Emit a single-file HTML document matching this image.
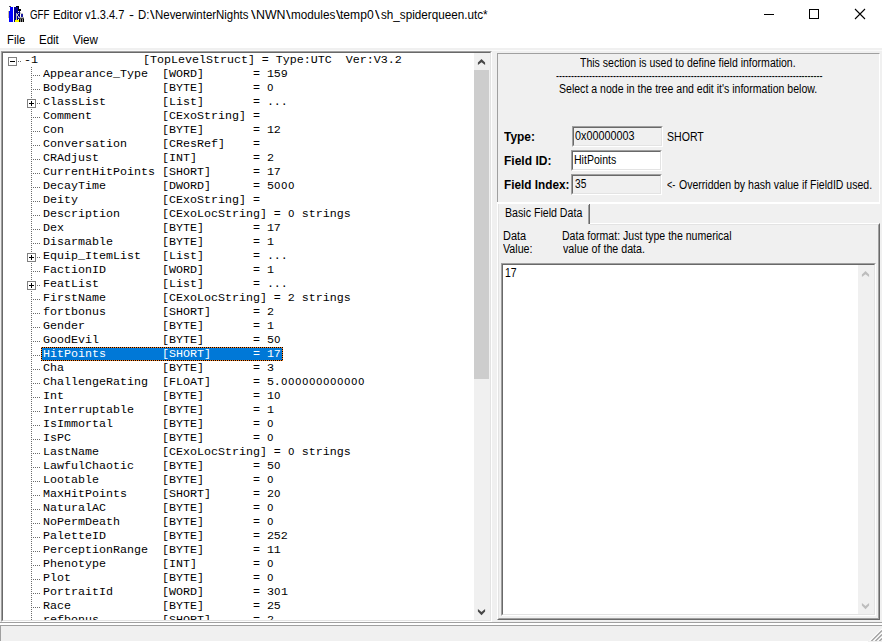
<!DOCTYPE html>
<html lang="en"><head><meta charset="utf-8"><title>GFF Editor</title>
<style>
html,body{margin:0;padding:0}
body{width:882px;height:642px;overflow:hidden;background:#f0f0f0;position:relative;font-family:"Liberation Sans",Arial,sans-serif}
.a{position:absolute}
.t{position:absolute;white-space:pre;display:block}
.sunk{position:absolute;box-sizing:border-box;border:1px solid;border-color:#a0a0a0 #fff #fff #a0a0a0}
.sunk>i{position:absolute;left:0;top:0;right:0;bottom:0;border:1px solid;border-color:#696969 #e3e3e3 #e3e3e3 #696969}
.hd{position:absolute;height:1px;background-image:repeating-linear-gradient(to right,#6c6c6c 0 1px,transparent 1px 2px)}
.vd{position:absolute;width:1px;background-image:repeating-linear-gradient(to bottom,#6c6c6c 0 1px,transparent 1px 2px)}
.box{position:absolute;width:9px;height:9px;box-sizing:border-box;border:1px solid #808080;background:#fff}
.box:before{content:"";position:absolute;left:1px;top:3px;width:5px;height:1px;background:#000}
.box.p:after{content:"";position:absolute;left:3px;top:1px;width:1px;height:5px;background:#000}
.m b{font:9.3px "DejaVu Sans",sans-serif;display:inline-block;width:6.361px;text-align:center}.m{font:10.6px/12px "Liberation Mono", monospace;transform:scale(1.1005,1.0);transform-origin:0 9px;-webkit-text-stroke:0px currentColor}
</style></head><body>

<div class="a" id="titlebar" style="left:0;top:0;width:882px;height:30px;background:#fff"></div>
<div class="a" id="menubar" style="left:0;top:30px;width:882px;height:18px;background:#fff"></div>
<div class="a" style="left:0;top:50px;width:882px;height:1px;background:#f9f9f9"></div>
<svg class="a" id="appicon" style="left:8px;top:6px" width="16" height="16" viewBox="0 0 16 16" shape-rendering="crispEdges">
<rect x="0" y="5" width="1" height="7" fill="#c8c0a0"/>
<rect x="2" y="1" width="3" height="4" fill="#0000ff"/>
<rect x="1" y="5" width="4" height="11" fill="#0000ff"/>
<rect x="1" y="0" width="2" height="1" fill="#505050"/>
<rect x="6" y="1" width="4" height="15" fill="#00008b"/>
<rect x="8" y="0" width="3" height="1" fill="#000"/>
<rect x="10" y="1" width="1" height="4" fill="#000"/>
<rect x="11" y="3" width="2" height="2" fill="#000"/>
<rect x="10" y="5" width="2" height="8" fill="#00008b"/>
<rect x="10" y="5" width="1" height="1" fill="#e0e0e0"/>
<rect x="10" y="7" width="1" height="1" fill="#e0e0e0"/>
<rect x="8" y="7" width="1" height="6" fill="#b8b8b8"/>
<rect x="9" y="8" width="1" height="2" fill="#c0c0c0"/>
<rect x="10" y="10" width="1" height="2" fill="#c0c0c0"/>
<rect x="12" y="6" width="1" height="2" fill="#c8c8c8"/>
<rect x="13" y="7" width="2" height="1" fill="#c0c0c0"/>
<rect x="13" y="8" width="2" height="3" fill="#1c1ca0"/>
<rect x="11" y="11" width="5" height="1" fill="#b0b0b0"/>
<rect x="11" y="12" width="5" height="1" fill="#484848"/>
<rect x="11" y="13" width="5" height="3" fill="#000"/>
<rect x="12" y="13" width="1" height="3" fill="#888"/>
<rect x="14" y="13" width="1" height="3" fill="#888"/>
<rect x="7" y="14" width="4" height="2" fill="#ffff00"/>
<rect x="8" y="13" width="1" height="1" fill="#ffff00"/>
</svg>
<div id="title">
<span class="t" style='left:29.50px;top:8.00px;font:12px/14px "Liberation Sans", Arial, sans-serif;color:#000;transform:scale(0.8083,1.0);transform-origin:0 11px;'>GFF</span> <span class="t" style='left:52.60px;top:8.00px;font:12px/14px "Liberation Sans", Arial, sans-serif;color:#000;transform:scale(0.9412,1.0);transform-origin:0 11px;'>Editor</span> <span class="t" style='left:85.00px;top:8.00px;font:12px/14px "Liberation Sans", Arial, sans-serif;color:#000;transform:scale(0.9205,1.0);transform-origin:0 11px;'>v1.3.4.7</span> <span class="t" style='left:128.80px;top:8.00px;font:12px/14px "Liberation Sans", Arial, sans-serif;color:#000;transform:scale(1.2513,1.0);transform-origin:0 11px;'>-</span> <span class="t" style='left:137.50px;top:8.00px;font:12px/14px "Liberation Sans", Arial, sans-serif;color:#000;transform:scale(0.9500,1.0);transform-origin:0 11px;'>D:</span><span class="t" style='left:149.80px;top:8.00px;font:12px/14px "Liberation Sans", Arial, sans-serif;color:#000;transform:scale(1.3789,1.0);transform-origin:0 11px;'>\</span><span class="t" style='left:155.20px;top:8.00px;font:12px/14px "Liberation Sans", Arial, sans-serif;color:#000;transform:scale(0.9538,1.0);transform-origin:0 11px;'>NeverwinterNights</span><span class="t" style='left:250.80px;top:8.00px;font:12px/14px "Liberation Sans", Arial, sans-serif;color:#000;transform:scale(1.3789,1.0);transform-origin:0 11px;'>\</span><span class="t" style='left:255.90px;top:8.00px;font:12px/14px "Liberation Sans", Arial, sans-serif;color:#000;transform:scale(1.0295,1.0);transform-origin:0 11px;'>NWN</span><span class="t" style='left:285.60px;top:8.00px;font:12px/14px "Liberation Sans", Arial, sans-serif;color:#000;transform:scale(1.3789,1.0);transform-origin:0 11px;'>\</span><span class="t" style='left:290.80px;top:8.00px;font:12px/14px "Liberation Sans", Arial, sans-serif;color:#000;transform:scale(0.9766,1.0);transform-origin:0 11px;'>modules</span><span class="t" style='left:335.50px;top:8.00px;font:12px/14px "Liberation Sans", Arial, sans-serif;color:#000;transform:scale(1.3789,1.0);transform-origin:0 11px;'>\</span><span class="t" style='left:340.40px;top:8.00px;font:12px/14px "Liberation Sans", Arial, sans-serif;color:#000;transform:scale(1.0076,1.0);transform-origin:0 11px;'>temp0</span><span class="t" style='left:375.30px;top:8.00px;font:12px/14px "Liberation Sans", Arial, sans-serif;color:#000;transform:scale(1.3789,1.0);transform-origin:0 11px;'>\</span><span class="t" style='left:380.60px;top:8.00px;font:12px/14px "Liberation Sans", Arial, sans-serif;color:#000;transform:scale(0.9743,1.0);transform-origin:0 11px;'>sh_spiderqueen.utc*</span>
</div>
<span class="t" style='left:7.00px;top:33.00px;font:12px/14px "Liberation Sans", Arial, sans-serif;color:#000;transform:scale(0.9414,1.0);transform-origin:0 11px;'>File</span>
<span class="t" style='left:39.00px;top:33.00px;font:12px/14px "Liberation Sans", Arial, sans-serif;color:#000;transform:scale(0.9576,1.0);transform-origin:0 11px;'>Edit</span>
<span class="t" style='left:73.00px;top:33.00px;font:12px/14px "Liberation Sans", Arial, sans-serif;color:#000;transform:scale(0.9681,1.0);transform-origin:0 11px;'>View</span>
<svg class="a" style="left:744px;top:0" width="138" height="30" viewBox="0 0 138 30" shape-rendering="crispEdges" fill="none" stroke="#000" stroke-width="1">
<path d="M20 14.5h10"/><rect x="65.5" y="9.5" width="9" height="9"/>
<path d="M111 9l10 10M121 9l-10 10" shape-rendering="auto" stroke-width="1.1"/></svg>
<div class="sunk" id="tree" style="left:1px;top:51px;width:491px;height:571px;background:#fff"><i></i></div>
<div class="a" style="left:3px;top:53px;width:471px;height:567px;overflow:hidden;background:#fff">
<div class="vd" style="left:28px;top:14px;height:560px"></div>
<div class="hd" style="left:15px;top:8px;width:4px"></div>
<div class="box" style="left:5px;top:4px"></div>
<span class="t m" style="left:20.6px;top:1px;color:#000">-1               [TopLevelStruct] = Type:UTC  Ver:V3.2</span>
<div class="hd" style="left:30px;top:22px;width:8px"></div>
<span class="t m" style="left:39.6px;top:15px;color:#000">Appearance_Type  [WORD]       = 159</span>
<div class="hd" style="left:30px;top:36px;width:8px"></div>
<span class="t m" style="left:39.6px;top:29px;color:#000">BodyBag          [BYTE]       = <b>0</b></span>
<div class="hd" style="left:30px;top:50px;width:8px"></div>
<div class="box p" style="left:24px;top:46px"></div>
<span class="t m" style="left:39.6px;top:43px;color:#000">ClassList        [List]       = ...</span>
<div class="hd" style="left:30px;top:64px;width:8px"></div>
<span class="t m" style="left:39.6px;top:57px;color:#000">Comment          [CExoString] =</span>
<div class="hd" style="left:30px;top:78px;width:8px"></div>
<span class="t m" style="left:39.6px;top:71px;color:#000">Con              [BYTE]       = 12</span>
<div class="hd" style="left:30px;top:92px;width:8px"></div>
<span class="t m" style="left:39.6px;top:85px;color:#000">Conversation     [CResRef]    =</span>
<div class="hd" style="left:30px;top:106px;width:8px"></div>
<span class="t m" style="left:39.6px;top:99px;color:#000">CRAdjust         [INT]        = 2</span>
<div class="hd" style="left:30px;top:120px;width:8px"></div>
<span class="t m" style="left:39.6px;top:113px;color:#000">CurrentHitPoints [SHORT]      = 17</span>
<div class="hd" style="left:30px;top:134px;width:8px"></div>
<span class="t m" style="left:39.6px;top:127px;color:#000">DecayTime        [DWORD]      = 5<b>0</b><b>0</b><b>0</b></span>
<div class="hd" style="left:30px;top:148px;width:8px"></div>
<span class="t m" style="left:39.6px;top:141px;color:#000">Deity            [CExoString] =</span>
<div class="hd" style="left:30px;top:162px;width:8px"></div>
<span class="t m" style="left:39.6px;top:155px;color:#000">Description      [CExoLocString] = <b>0</b> strings</span>
<div class="hd" style="left:30px;top:176px;width:8px"></div>
<span class="t m" style="left:39.6px;top:169px;color:#000">Dex              [BYTE]       = 17</span>
<div class="hd" style="left:30px;top:190px;width:8px"></div>
<span class="t m" style="left:39.6px;top:183px;color:#000">Disarmable       [BYTE]       = 1</span>
<div class="hd" style="left:30px;top:204px;width:8px"></div>
<div class="box p" style="left:24px;top:200px"></div>
<span class="t m" style="left:39.6px;top:197px;color:#000">Equip_ItemList   [List]       = ...</span>
<div class="hd" style="left:30px;top:218px;width:8px"></div>
<span class="t m" style="left:39.6px;top:211px;color:#000">FactionID        [WORD]       = 1</span>
<div class="hd" style="left:30px;top:232px;width:8px"></div>
<div class="box p" style="left:24px;top:228px"></div>
<span class="t m" style="left:39.6px;top:225px;color:#000">FeatList         [List]       = ...</span>
<div class="hd" style="left:30px;top:246px;width:8px"></div>
<span class="t m" style="left:39.6px;top:239px;color:#000">FirstName        [CExoLocString] = 2 strings</span>
<div class="hd" style="left:30px;top:260px;width:8px"></div>
<span class="t m" style="left:39.6px;top:253px;color:#000">fortbonus        [SHORT]      = 2</span>
<div class="hd" style="left:30px;top:274px;width:8px"></div>
<span class="t m" style="left:39.6px;top:267px;color:#000">Gender           [BYTE]       = 1</span>
<div class="hd" style="left:30px;top:288px;width:8px"></div>
<span class="t m" style="left:39.6px;top:281px;color:#000">GoodEvil         [BYTE]       = 5<b>0</b></span>
<div class="hd" style="left:30px;top:302px;width:8px"></div>
<div class="a" id="sel" style="left:38px;top:294px;width:242px;height:14px;background:repeating-linear-gradient(90deg,#ff8728 0 1px,#000 1px 2px) 0 0/100% 1px no-repeat,repeating-linear-gradient(90deg,#000 0 1px,#ff8728 1px 2px) 0 100%/100% 1px no-repeat,repeating-linear-gradient(180deg,#ff8728 0 1px,#000 1px 2px) 0 0/1px 100% no-repeat,repeating-linear-gradient(180deg,#000 0 1px,#ff8728 1px 2px) 100% 0/1px 100% no-repeat,#0078d7"></div>
<span class="t m" style="left:39.6px;top:295px;color:#fff">HitPoints        [SHORT]      = 17</span>
<div class="hd" style="left:30px;top:316px;width:8px"></div>
<span class="t m" style="left:39.6px;top:309px;color:#000">Cha              [BYTE]       = 3</span>
<div class="hd" style="left:30px;top:330px;width:8px"></div>
<span class="t m" style="left:39.6px;top:323px;color:#000">ChallengeRating  [FLOAT]      = 5.<b>0</b><b>0</b><b>0</b><b>0</b><b>0</b><b>0</b><b>0</b><b>0</b><b>0</b><b>0</b><b>0</b><b>0</b></span>
<div class="hd" style="left:30px;top:344px;width:8px"></div>
<span class="t m" style="left:39.6px;top:337px;color:#000">Int              [BYTE]       = 1<b>0</b></span>
<div class="hd" style="left:30px;top:358px;width:8px"></div>
<span class="t m" style="left:39.6px;top:351px;color:#000">Interruptable    [BYTE]       = 1</span>
<div class="hd" style="left:30px;top:372px;width:8px"></div>
<span class="t m" style="left:39.6px;top:365px;color:#000">IsImmortal       [BYTE]       = <b>0</b></span>
<div class="hd" style="left:30px;top:386px;width:8px"></div>
<span class="t m" style="left:39.6px;top:379px;color:#000">IsPC             [BYTE]       = <b>0</b></span>
<div class="hd" style="left:30px;top:400px;width:8px"></div>
<span class="t m" style="left:39.6px;top:393px;color:#000">LastName         [CExoLocString] = <b>0</b> strings</span>
<div class="hd" style="left:30px;top:414px;width:8px"></div>
<span class="t m" style="left:39.6px;top:407px;color:#000">LawfulChaotic    [BYTE]       = 5<b>0</b></span>
<div class="hd" style="left:30px;top:428px;width:8px"></div>
<span class="t m" style="left:39.6px;top:421px;color:#000">Lootable         [BYTE]       = <b>0</b></span>
<div class="hd" style="left:30px;top:442px;width:8px"></div>
<span class="t m" style="left:39.6px;top:435px;color:#000">MaxHitPoints     [SHORT]      = 2<b>0</b></span>
<div class="hd" style="left:30px;top:456px;width:8px"></div>
<span class="t m" style="left:39.6px;top:449px;color:#000">NaturalAC        [BYTE]       = <b>0</b></span>
<div class="hd" style="left:30px;top:470px;width:8px"></div>
<span class="t m" style="left:39.6px;top:463px;color:#000">NoPermDeath      [BYTE]       = <b>0</b></span>
<div class="hd" style="left:30px;top:484px;width:8px"></div>
<span class="t m" style="left:39.6px;top:477px;color:#000">PaletteID        [BYTE]       = 252</span>
<div class="hd" style="left:30px;top:498px;width:8px"></div>
<span class="t m" style="left:39.6px;top:491px;color:#000">PerceptionRange  [BYTE]       = 11</span>
<div class="hd" style="left:30px;top:512px;width:8px"></div>
<span class="t m" style="left:39.6px;top:505px;color:#000">Phenotype        [INT]        = <b>0</b></span>
<div class="hd" style="left:30px;top:526px;width:8px"></div>
<span class="t m" style="left:39.6px;top:519px;color:#000">Plot             [BYTE]       = <b>0</b></span>
<div class="hd" style="left:30px;top:540px;width:8px"></div>
<span class="t m" style="left:39.6px;top:533px;color:#000">PortraitId       [WORD]       = 3<b>0</b>1</span>
<div class="hd" style="left:30px;top:554px;width:8px"></div>
<span class="t m" style="left:39.6px;top:547px;color:#000">Race             [BYTE]       = 25</span>
<div class="hd" style="left:30px;top:568px;width:8px"></div>
<span class="t m" style="left:39.6px;top:561px;color:#000">refbonus         [SHORT]      = 2</span>
</div>
<div class="a" id="tsb" style="left:474px;top:53px;width:16px;height:567px;background:#f0f0f0"></div>
<div class="a" style="left:474px;top:70px;width:15px;height:309px;background:#cdcdcd"></div>
<svg class="a" style="left:474px;top:53px" width="15" height="17" viewBox="0 0 15 17" fill="#484848"><path d="M3.9 12.1V9.5L7.5 5.9L11.1 9.5V12.1L7.5 9.2Z"/></svg>
<svg class="a" style="left:474px;top:603px" width="15" height="17" viewBox="0 0 15 17" fill="#484848"><path d="M3.9 6V8.6L7.5 12.2L11.1 8.6V6L7.5 8.9Z"/></svg>
<div class="a" id="info" style="left:497px;top:53px;width:383px;height:149px;box-sizing:border-box;border:1px solid;border-color:#a0a0a0 #fff #fff #a0a0a0;border-bottom:none"></div>
<div class="a" style="left:497px;top:202px;width:383px;height:2px;background:#fff"></div>
<span class="t" style='left:580.40px;top:56.00px;font:12.5px/14px "Liberation Sans", Arial, sans-serif;color:#000;transform:scale(0.8409,1.0);transform-origin:0 11px;'>This section is used to define field information.</span>
<span class="t" style='left:555.60px;top:68.82px;font:12.5px/14px "Liberation Sans", Arial, sans-serif;color:#000;transform:scale(0.7196,1.0);transform-origin:0 11px;'>-----------------------------------------------------------------------------------------</span>
<span class="t" style='left:558.50px;top:82.00px;font:12.5px/14px "Liberation Sans", Arial, sans-serif;color:#000;transform:scale(0.8437,1.0);transform-origin:0 11px;'>Select a node in the tree and edit it&#x27;s information below.</span>
<span class="t" style='left:503.80px;top:130.00px;font:bold 12.5px/14px "Liberation Sans", Arial, sans-serif;color:#000;transform:scale(0.9564,1.0);transform-origin:0 11px;'>Type:</span>
<span class="t" style='left:503.60px;top:154.00px;font:bold 12.5px/14px "Liberation Sans", Arial, sans-serif;color:#000;transform:scale(0.9615,1.0);transform-origin:0 11px;'>Field ID:</span>
<span class="t" style='left:503.60px;top:178.00px;font:bold 12.5px/14px "Liberation Sans", Arial, sans-serif;color:#000;transform:scale(0.9417,1.0);transform-origin:0 11px;'>Field Index:</span>
<div class="sunk" style="left:572px;top:126px;width:91px;height:21px;background:#f0f0f0"><i></i></div>
<div class="sunk" style="left:571px;top:150px;width:91px;height:21px;background:#fff"><i></i></div>
<div class="sunk" style="left:571px;top:174px;width:91px;height:21px;background:#f0f0f0"><i></i></div>
<span class="t" style='left:574.90px;top:129.00px;font:12.5px/14px "Liberation Sans", Arial, sans-serif;color:#000;transform:scale(0.8647,1.0);transform-origin:0 11px;'>0x00000003</span>
<span class="t" style='left:573.80px;top:153.00px;font:12.5px/14px "Liberation Sans", Arial, sans-serif;color:#000;transform:scale(0.8438,1.0);transform-origin:0 11px;'>HitPoints</span>
<span class="t" style='left:574.50px;top:177.00px;font:12.5px/14px "Liberation Sans", Arial, sans-serif;color:#000;transform:scale(0.8129,1.0);transform-origin:0 11px;'>35</span>
<span class="t" style='left:667.20px;top:130.00px;font:12.5px/14px "Liberation Sans", Arial, sans-serif;color:#000;transform:scale(0.8455,1.0);transform-origin:0 11px;'>SHORT</span>
<span class="t" style='left:667.20px;top:178.00px;font:12.5px/14px "Liberation Sans", Arial, sans-serif;color:#000;transform:scale(0.7328,1.0);transform-origin:0 11px;'>&lt;-</span> <span class="t" style='left:679.10px;top:178.00px;font:12.5px/14px "Liberation Sans", Arial, sans-serif;color:#000;transform:scale(0.8422,1.0);transform-origin:0 11px;'>Overridden by hash value if FieldID used.</span>
<div class="a" id="page" style="left:497px;top:223px;width:383px;height:397px;box-sizing:border-box;border:1px solid;border-color:#fff #696969 #696969 #fff"></div>
<div class="a" style="left:498px;top:224px;width:381px;height:395px;box-sizing:border-box;border:1px solid;border-color:#e3e3e3 #a0a0a0 #a0a0a0 #e3e3e3"></div>
<div class="a" id="tab" style="left:497px;top:204px;width:93px;height:21px;background:#f0f0f0"></div>
<div class="a" style="left:497px;top:204px;width:1px;height:21px;background:#fff"></div>
<div class="a" style="left:498px;top:204px;width:1px;height:21px;background:#e3e3e3"></div>
<div class="a" style="left:588px;top:205px;width:1px;height:19px;background:#a0a0a0"></div>
<div class="a" style="left:589px;top:204px;width:1px;height:20px;background:#696969"></div>
<span class="t" style='left:505.10px;top:206.00px;font:12.5px/14px "Liberation Sans", Arial, sans-serif;color:#000;transform:scale(0.8492,1.0);transform-origin:0 11px;'>Basic Field Data</span>
<span class="t" style='left:503.00px;top:229.00px;font:12.5px/14px "Liberation Sans", Arial, sans-serif;color:#000;transform:scale(0.8746,1.0);transform-origin:0 11px;'>Data</span>
<span class="t" style='left:502.70px;top:242.00px;font:12.5px/14px "Liberation Sans", Arial, sans-serif;color:#000;transform:scale(0.8548,1.0);transform-origin:0 11px;'>Value:</span>
<span class="t" style='left:562.00px;top:229.00px;font:12.5px/14px "Liberation Sans", Arial, sans-serif;color:#000;transform:scale(0.8442,1.0);transform-origin:0 11px;'>Data format: Just type the numerical</span>
<span class="t" style='left:562.60px;top:242.00px;font:12.5px/14px "Liberation Sans", Arial, sans-serif;color:#000;transform:scale(0.8551,1.0);transform-origin:0 11px;'>value of the data.</span>
<div class="sunk" id="ta" style="left:501px;top:263px;width:375px;height:353px;background:#fff"><i></i></div>
<div class="a" style="left:858px;top:265px;width:16px;height:349px;background:#f0f0f0"></div>
<svg class="a" style="left:858px;top:265px" width="16" height="17" viewBox="0 0 16 17" fill="#bdbdbd"><path d="M3.9 12.1V9.5L7.5 5.9L11.1 9.5V12.1L7.5 9.2Z"/></svg>
<svg class="a" style="left:858px;top:597px" width="16" height="17" viewBox="0 0 16 17" fill="#bdbdbd"><path d="M3.9 6V8.6L7.5 12.2L11.1 8.6V6L7.5 8.9Z"/></svg>
<span class="t" style='left:504.50px;top:266.00px;font:12.5px/14px "Liberation Sans", Arial, sans-serif;color:#000;transform:scale(0.8345,1.0);transform-origin:0 11px;'>17</span>
<div class="a" style="left:0;top:622px;width:882px;height:1px;background:#a0a0a0"></div>
<div class="a" style="left:0;top:623px;width:882px;height:2px;background:#fff"></div>
<div class="a" style="left:0;top:625px;width:882px;height:1px;background:#a0a0a0"></div>
<div class="a" style="left:0;top:625px;width:1px;height:17px;background:#a0a0a0"></div>
<div class="a" style="left:0;top:641px;width:868px;height:1px;background:#fff"></div>
<svg class="a" style="left:866px;top:626px" width="16" height="15" viewBox="0 0 16 15" stroke-width="1.3"><path d="M3 16L16 3M7 16L16 7M11 16L16 11" stroke="#fff"/><path d="M4.5 16L16 4.5M8.5 16L16 8.5M12.5 16L16 12.5" stroke="#a0a0a0"/></svg>
</body></html>
